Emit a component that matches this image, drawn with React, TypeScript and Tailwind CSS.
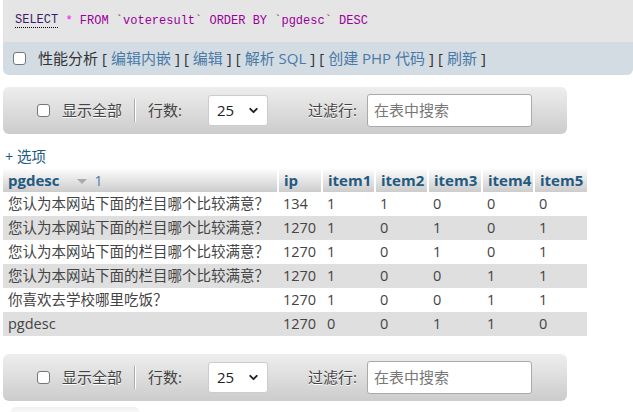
import React from "react";
import { ChevronDown } from "lucide-react";

const rows = [
  ["您认为本网站下面的栏目哪个比较满意？", "134", "1", "1", "0", "0", "0"],
  ["您认为本网站下面的栏目哪个比较满意？", "1270", "1", "0", "1", "0", "1"],
  ["您认为本网站下面的栏目哪个比较满意？", "1270", "1", "0", "1", "0", "1"],
  ["您认为本网站下面的栏目哪个比较满意？", "1270", "1", "0", "0", "1", "1"],
  ["你喜欢去学校哪里吃饭？", "1270", "1", "0", "0", "1", "1"],
  ["pgdesc", "1270", "0", "0", "1", "1", "0"],
];

const cols = [
  { name: "ip", w: "w-[44px]" },
  { name: "item1", w: "w-[53px]" },
  { name: "item2", w: "w-[53px]" },
  { name: "item3", w: "w-[54px]" },
  { name: "item4", w: "w-[52px]" },
  { name: "item5", w: "w-[53px]" },
];

const links = ["编辑内嵌", "编辑", "解析 SQL", "创建 PHP 代码", "刷新"];

function Box() {
  return <span className="inline-block w-[13px] h-[13px] rounded-[3px] border border-[#767676] bg-white" />;
}

// 分页 / 过滤 工具条
function NavBar() {
  return (
    <div className="ml-[3px] w-[564px] h-[47px] rounded-[6px] bg-gradient-to-b from-[#eeeeee] to-[#cccccc] flex items-center text-[15px] text-[#444]">
      <span className="ml-[34px] flex"><Box /></span>
      <span className="ml-[12px] [text-shadow:0_1px_0_#fff]">显示全部</span>
      <span className="ml-[12px] w-[2px] h-[23px] bg-[#aaa] border-r border-white" />
      <span className="ml-[12px]">行数:</span>
      <span className="ml-[26px] w-[60px] h-[31px] bg-white border border-[#ccc] rounded-[3px] flex items-center justify-between pl-[8px] pr-[7px] text-[#222]">
        25
        <ChevronDown size={13} strokeWidth={3.5} />
      </span>
      <span className="ml-[40px] [text-shadow:0_1px_0_#fff]">过滤行:</span>
      <span className="ml-[10px] w-[165px] h-[33px] bg-white border border-[#aaa] rounded-[3px] flex items-center pl-[6px] text-[#777]">
        在表中搜索
      </span>
    </div>
  );
}

export default function App() {
  return (
    <div className="w-[633px] h-[412px] overflow-hidden bg-white font-['Open_Sans','Noto_Sans_CJK_SC',sans-serif] leading-none">
      {/* SQL 查询框 */}
      <div className="ml-[3px] rounded-b-[6px] overflow-hidden">
        <div className="h-[42px] bg-[#e5e5e5] flex items-center pl-[12px] font-['Liberation_Mono',monospace] text-[12px]">
          <span className="text-[#3d1a66] border-b border-dotted border-black leading-[13px]">SELECT</span>
          <span className="text-[#ff00ff]">&nbsp;*&nbsp;</span>
          <span className="text-[#990099]">FROM `voteresult` ORDER BY `pgdesc` DESC</span>
        </div>
        <div className="h-[33px] bg-[#d3dce3] flex items-center pl-[10px] text-[15px] text-[#333]">
          <Box />
          <span className="ml-[12px]">性能分析</span>
          {links.map((l) => (
            <span key={l} className="ml-[4px] flex gap-[4px]">
              <span>[</span>
              <span className="text-[#4a79a6]">{l}</span>
              <span>]</span>
            </span>
          ))}
        </div>
      </div>

      <div className="mt-[12px]">
        <NavBar />
      </div>

      <div className="mt-[16px] ml-[5px] h-[16px] text-[14.5px] text-[#235a81]">+ 选项</div>

      {/* 结果表 */}
      <table className="mt-[2px] ml-[3px] border-collapse text-[14.5px] text-[#444]">
        <thead>
          <tr className="h-[24px] bg-gradient-to-b from-white to-[#cccccc]">
            <th className="w-[275px] text-left pl-[5px] border-r-2 border-white font-bold text-[#235a81] text-[15px]">
              pgdesc
              <span className="inline-block ml-[17px] align-middle w-0 h-0 border-l-[5px] border-r-[5px] border-t-[5px] border-l-transparent border-r-transparent border-t-[#aaa]" />
              <span className="ml-[8px] font-normal text-[#4a79a6] text-[14px]">1</span>
            </th>
            {cols.map((c, i) => (
              <th
                key={c.name}
                className={`${c.w} text-left pl-[5px] font-bold text-[#235a81] text-[15px] ${i < cols.length - 1 ? "border-r-2 border-white" : ""}`}
              >
                {c.name}
              </th>
            ))}
          </tr>
        </thead>
        <tbody>
          {rows.map((r, i) => (
            <tr key={i} className={`h-[24px] ${i % 2 === 0 ? "bg-white" : "bg-[#dfdfdf]"}`}>
              {r.map((v, j) => (
                <td key={j} className="pl-[5px] whitespace-nowrap">
                  {v}
                </td>
              ))}
            </tr>
          ))}
        </tbody>
      </table>

      <div className="mt-[18px]">
        <NavBar />
      </div>

      <div className="mt-[6px] ml-[10px] w-[130px] h-[10px] rounded-t-[6px] bg-gradient-to-b from-[#f0f0f0] to-white" />
    </div>
  );
}
